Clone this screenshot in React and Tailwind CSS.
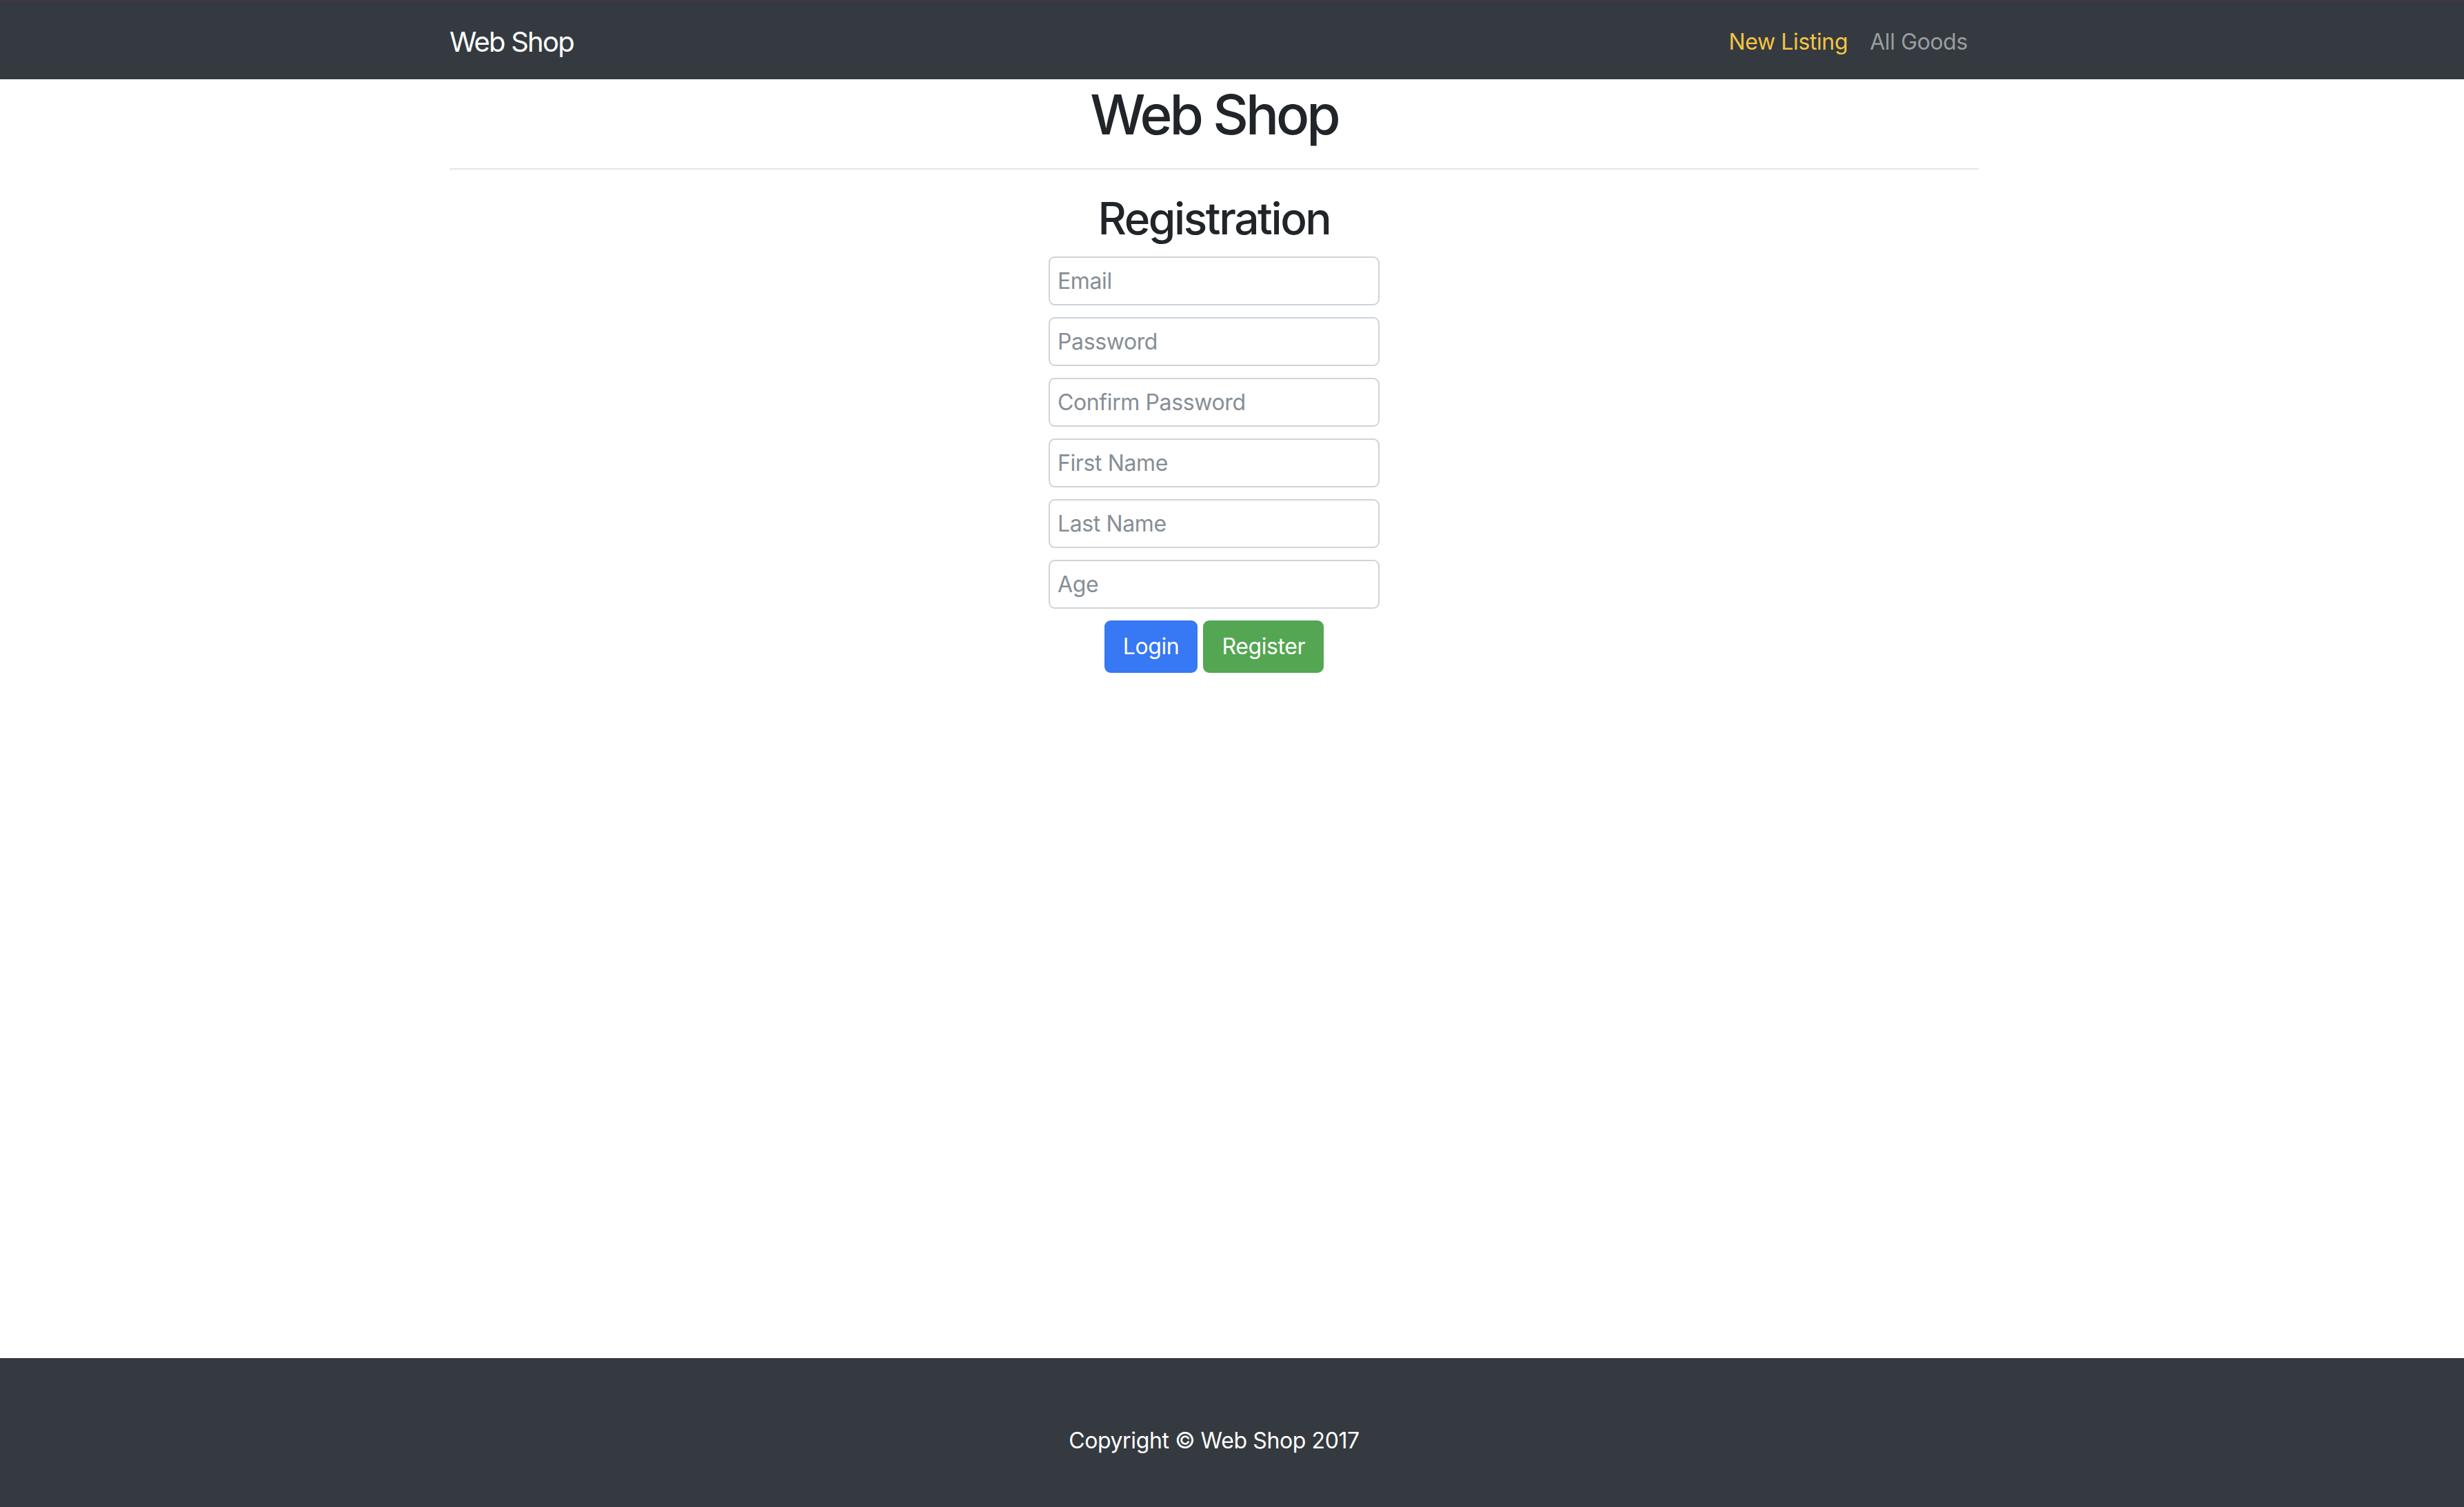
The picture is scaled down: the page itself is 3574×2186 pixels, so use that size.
const FIELDS = ['Email', 'Password', 'Confirm Password', 'First Name', 'Last Name', 'Age'];

export default function App() {
    return (
        <div className="min-h-screen flex flex-col bg-white font-['Inter','Liberation_Sans',sans-serif] text-[#212529] tracking-[-0.024em]">
            {/* ── Navbar ── */}
            <nav className="h-[115px] bg-[#343a40] border-t-[3px] border-[#3d3747]">
                <div className="ml-[652px] w-[2218px] h-full pt-[4px] flex items-center justify-between">
                    <a className="text-[40px] leading-[60px] text-white tracking-[-0.045em]">Web Shop</a>
                    <div className="flex items-center">
                        <a className="px-[16px] text-[32px] leading-[48px] text-[#f6c344]">New Listing</a>
                        <a className="px-[16px] text-[32px] leading-[48px] text-[#9a9da0]">All Goods</a>
                    </div>
                </div>
            </nav>

            {/* ── Main ── */}
            <main className="flex-1">
                <div className="ml-[652px] w-[2218px]">
                    <h1 className="mt-[3px] text-center text-[80px] leading-[96px] font-medium tracking-[-0.05em]">Web Shop</h1>
                    <hr className="mt-[30px] border-0 h-[2px] bg-[#e6e6e6]" />
                    <h2 className="mt-[32px] text-center text-[64px] leading-[77px] font-medium tracking-[-0.038em]">
                        Registration
                    </h2>

                    <form className="mx-auto w-[480px] mt-[17px] flex flex-col gap-[17px]">
                        {FIELDS.map((f) => (
                            <input
                                key={f}
                                placeholder={f}
                                className="h-[71px] w-full rounded-[9px] border-2 border-[#ced4da] px-[11px] text-[32px] text-[#495057] placeholder:text-[#868e96] outline-none"
                            />
                        ))}
                        <div className="flex justify-center gap-[8px]">
                            <button type="button" className="h-[76px] px-[27px] rounded-[9px] bg-[#3778f5] text-white text-[32px]">
                                Login
                            </button>
                            <button type="button" className="h-[76px] px-[27px] rounded-[9px] bg-[#54a653] text-white text-[32px]">
                                Register
                            </button>
                        </div>
                    </form>
                </div>
            </main>

            {/* ── Footer ── */}
            <footer className="h-[216px] bg-[#343a40] pt-[96px]">
                <p className="ml-[652px] w-[2218px] text-center text-white text-[32px] leading-[48px]">
                    Copyright © Web Shop 2017
                </p>
            </footer>
        </div>
    );
}
